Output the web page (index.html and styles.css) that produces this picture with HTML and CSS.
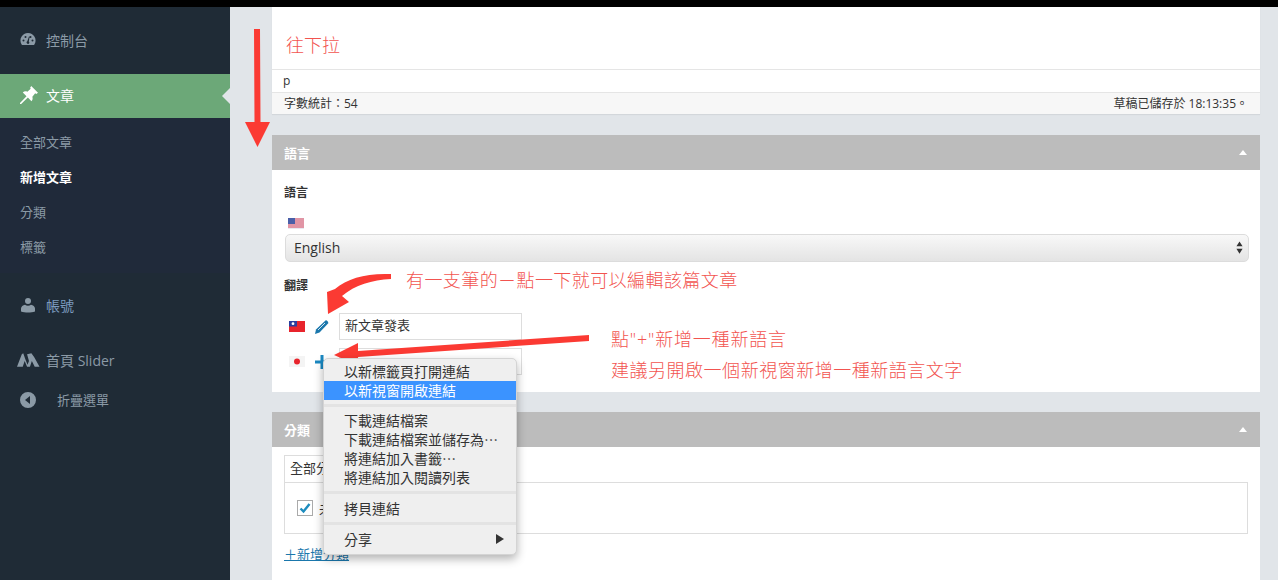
FILE: index.html
```html
<!DOCTYPE html>
<html lang="zh-Hant">
<head>
<meta charset="utf-8">
<title>新增文章</title>
<link rel="stylesheet" href="styles.css">
</head>
<body>
<div class="topbar"></div>
<div class="app">
  <nav class="sidebar">
    <a class="nav-item nav-dash">
      <svg class="ico" viewBox="0 0 16 16"><path fill-rule="evenodd" d="M8 1a7.500 7.500 0 0 0-6.400 11.400c.3.400.6.600 1 .6h10.800c.4 0 .7-.2 1-.6A7.500 7.500 0 0 0 8 1zM3.500 9.500a1 1 0 1 1 0-2 1 1 0 0 1 0 2zm2-3.500a1 1 0 1 1 0-2 1 1 0 0 1 0 2zM8 12a1.500 1.500 0 0 1-.7-2.800L9 4.500l.6.2-.8 4.700A1.500 1.500 0 0 1 8 12zm2.500-6a1 1 0 1 1 0-2 1 1 0 0 1 0 2zm2 3.500a1 1 0 1 1 0-2 1 1 0 0 1 0 2z"/></svg>
      <span>控制台</span>
    </a>
    <a class="nav-item nav-active">
      <svg class="ico ico-pin" viewBox="0 0 16 16"><path d="M10 0l6 6-1.500 1-1-.5-2.500 3c.5 1.800.2 3-.8 4L7 10.200 1 16H0v-1l5.800-6L2.500 5.800c1-1 2.200-1.300 4-.8l3-2.500-.5-1z"/></svg>
      <span>文章</span>
    </a>
    <div class="submenu">
      <a class="sub-item">全部文章</a>
      <a class="sub-item sub-current">新增文章</a>
      <a class="sub-item">分類</a>
      <a class="sub-item">標籤</a>
    </div>
    <a class="nav-item nav-user">
      <svg class="ico" viewBox="0 0 16 16"><circle cx="8" cy="4" r="3"/><path d="M1 14.500v-3c0-2 2-3.500 4-3.800.8.600 1.800 1 3 1s2.200-.4 3-1c2 .3 4 1.800 4 3.800v3c-2 .7-4.500 1-7 1s-5-.3-7-1z"/></svg>
      <span class="blueish">帳號</span>
    </a>
    <a class="nav-item nav-slider">
      <svg class="ico ico-wide" viewBox="0 0 24 14"><path d="M0 14L5 1l1.500-1L9 7l2 5 1.500-4-2-7 4.500-1 3 4 5.500 10h-5l-3-6-2 6h-3L8 8l-2 6z"/></svg>
      <span>首頁 Slider</span>
    </a>
    <a class="nav-item nav-collapse">
      <svg class="ico" viewBox="0 0 16 16"><path fill-rule="evenodd" d="M8 0a8 8 0 1 1 0 16A8 8 0 0 1 8 0zm2 4L5 8l5 4z"/></svg>
      <span class="collapse-label">折疊選單</span>
    </a>
  </nav>

  <main class="content">
    <section class="editor">
      <div class="editor-body">往下拉</div>
      <div class="path-row">p</div>
      <div class="status-row"><span>字數統計：54</span><span>草稿已儲存於 18:13:35。</span></div>
    </section>

    <section class="panel panel-lang">
      <header class="panel-head"><span>語言</span><i class="caret"></i></header>
      <div class="panel-body">
        <h4 class="field-label">語言</h4>
        <svg class="flag flag-us" viewBox="0 0 16 11"><rect width="16" height="11" fill="#e8e8f0"/><path d="M0 1h16M0 3h16M0 5h16M0 7h16M0 9h16" stroke="#d9435a" stroke-width="1"/><rect width="7" height="6" fill="#4a5fa8"/></svg>
        <div class="select"><span>English</span>
          <svg class="updown" viewBox="0 0 8 14"><path d="M4 0l3.500 5.500h-7zM4 14L.5 8.500h7z"/></svg>
        </div>
        <h4 class="field-label label-trans">翻譯</h4>
        <div class="trans-row">
          <svg class="flag" viewBox="0 0 16 11"><rect width="16" height="11" fill="#e8242c"/><rect width="8" height="5.500" fill="#2a3f9e"/><circle cx="4" cy="2.700" r="1.400" fill="#fff"/></svg>
          <svg class="action" viewBox="0 0 16 16"><path fill="#1a77ac" d="M11.500 1.500c1-.8 3 1.300 2.800 2.800L5.500 13.500 1 15l1-4.500z"/><path stroke="#fff" stroke-width=".8" d="M4 11l7-7"/></svg>
          <div class="trans-input">新文章發表</div>
        </div>
        <div class="trans-row row-second">
          <svg class="flag" viewBox="0 0 16 11"><rect width="16" height="11" fill="#f4f4f4"/><circle cx="8" cy="5.500" r="3" fill="#e8242c"/></svg>
          <svg class="action" viewBox="0 0 16 16"><path fill="#1a87c0" d="M6.500 1h3v5.500H15v3H9.500V15h-3V9.500H1v-3h5.500z"/></svg>
          <div class="trans-input"></div>
        </div>
      </div>
    </section>

    <section class="panel panel-cat">
      <header class="panel-head"><span>分類</span><i class="caret"></i></header>
      <div class="panel-body cat-body">
        <div class="cat-tab">全部分類</div>
        <div class="cat-box">
          <span class="check"><svg viewBox="0 0 14 14"><path d="M2.500 7.500l3 3 6-7.500" fill="none" stroke="#1e8cbe" stroke-width="2.400"/></svg></span>
          <span>未分類</span>
        </div>
        <a class="add-cat">＋新增分類</a>
      </div>
    </section>
  </main>
</div>

<svg class="overlay" viewBox="0 0 1278 580">
  <path d="M254 29h6l.5 93h9.500l-12.500 25-12.500-25h9.500z" fill="#fb3a33"/>
  <path d="M391 274C366 273 348 278 335 289l-8 3 1 22 21-12-7-6c13-11 30-16 49-17z" fill="#fb3a33"/>
  <path d="M589 335v6l-231 16 1 9-25-11 24-12 0 8z" fill="#fb3a33"/>
</svg>
<div class="note note-pen">有一支筆的－點一下就可以編輯該篇文章</div>
<div class="note note-plus">點"+"新增一種新語言</div>
<div class="note note-tip">建議另開啟一個新視窗新增一種新語言文字</div>

<div class="ctx">
  <div class="ctx-item">以新標籤頁打開連結</div>
  <div class="ctx-item ctx-hl">以新視窗開啟連結</div>
  <div class="ctx-sep"></div>
  <div class="ctx-item">下載連結檔案</div>
  <div class="ctx-item">下載連結檔案並儲存為⋯</div>
  <div class="ctx-item">將連結加入書籤⋯</div>
  <div class="ctx-item">將連結加入閱讀列表</div>
  <div class="ctx-sep ctx-sep-wide"></div>
  <div class="ctx-item">拷貝連結</div>
  <div class="ctx-sep"></div>
  <div class="ctx-item ctx-sub"><span>分享</span><i class="ctx-arrow"></i></div>
</div>
</body>
</html>
```
FILE: styles.css
```css
* { box-sizing: border-box; }
html, body { margin: 0; height: 580px; overflow: hidden; }
body {
  background: #e1e5e9;
  font-family: "Open Sans", "Noto Sans CJK TC", sans-serif;
  font-size: 13px;
  color: #333;
  position: relative;
}
.topbar { height: 7px; background: #000; }
.app { display: flex; height: 573px; }

/* sidebar */
.sidebar { width: 230px; flex: none; background: #1f2b36; display: flex; flex-direction: column; color: #8b9aa6; }
.nav-item { display: flex; align-items: center; padding-left: 20px; font-size: 14px; }
.ico { width: 16px; height: 16px; fill: #8b9aa6; flex: none; margin-right: 10px; }
.ico-wide { width: 23px; height: 14px; margin-left: -3px; margin-right: 6px; }
.ico-pin { width: 18px; height: 18px; margin-right: 8px; }
.nav-dash { height: 67px; padding-bottom: 2px; }
.nav-active { height: 44px; background: #6ca878; color: #fff; position: relative; padding-bottom: 2px; }
.nav-active .ico { fill: #fff; }
.nav-active::after { content: ""; position: absolute; right: 0; top: 14px; border: 8px solid transparent; border-right-color: #e1e5e9; border-left: 0; }
.submenu { height: 155px; background: #202a3a; display: flex; flex-direction: column; padding-top: 7px; }
.sub-item { height: 35px; line-height: 35px; padding-left: 20px; font-size: 13px; color: #8b9aa6; }
.sub-current { color: #fff; font-weight: 700; }
.nav-user { height: 33px; margin-top: 15px; }
.blueish { color: #7d9cc0; }
.nav-slider { height: 33px; margin-top: 22px; }
.nav-collapse { height: 33px; margin-top: 7px; }
.collapse-label { margin-left: 11px; font-size: 13px; }

/* content */
.content { flex: 1; padding-left: 42px; padding-right: 18px; }
.editor { background: #fff; box-shadow: 0 1px 1px rgba(0,0,0,.06); }
.editor-body { height: 62px; padding: 26px 0 0 14px; font-size: 18px; line-height: 24px; color: #f25450; font-weight: 300; }
.path-row { height: 23px; border-top: 1px solid #e5e5e5; padding-left: 11px; line-height: 22px; font-size: 12px; }
.status-row { height: 22px; display: flex; justify-content: space-between; padding: 0 12px 0 12px; line-height: 21px; font-size: 12px; background: #f7f7f7; border-top: 1px solid #e5e5e5; }

.panel { background: #fff; }
.panel-lang { margin-top: 21px; height: 257px; }
.panel-cat { margin-top: 20px; height: 168px; }
.panel-head { height: 35px; background: #bcbcbc; color: #fff; display: flex; justify-content: space-between; align-items: center; padding: 0 13px 1px 12px; font-size: 13px; font-weight: 700; }
.caret { border: 4px solid transparent; border-bottom: 5px solid #fff; border-top: 0; margin-top: 1px; }
.panel-body { padding: 0 12px; }
.field-label { margin: 0; padding-top: 14px; height: 48px; font-size: 12px; line-height: 17px; font-weight: 700; color: #333; }
.flag { width: 16px; height: 11px; display: block; flex: none; }
.flag-us { margin: 0 0 0 4px; }
.select { height: 28px; margin: 5px -1px 0 1px; border: 1px solid #dcdcdc; border-radius: 5px; background: linear-gradient(#f8f8f8, #e4e4e4); display: flex; align-items: center; justify-content: space-between; padding: 0 5px 1px 8px; font-size: 14px; }
.updown { width: 7px; height: 13px; fill: #333; }
.label-trans { padding-top: 15px; height: 51px; }
.trans-row { display: flex; align-items: center; height: 27px; padding-left: 5px; }
.trans-row .action { width: 16px; height: 16px; margin-left: 9px; flex: none; }
.row-second { margin-top: 8px; }
.trans-input { width: 183px; height: 27px; margin-left: 9px; border: 1px solid #ddd; padding-left: 5px; line-height: 23px; font-size: 13px; background: #fff; }

.cat-body { display: flow-root; }
.cat-tab { margin-top: 8px; width: 120px; height: 28px; padding-left: 5px; line-height: 25px; font-size: 13px; border: 1px solid #ddd; border-bottom: 0; background: #fff; }
.cat-box { height: 52px; margin-top: -1px; border: 1px solid #ddd; display: flex; align-items: center; gap: 6px; padding-left: 12px; }
.check { width: 16px; height: 16px; border: 1px solid #aaa; display: block; background: #fff; }
.check svg { display: block; width: 14px; height: 14px; }
.add-cat { display: inline-block; margin-top: 10px; color: #1a77ac; text-decoration: underline; font-size: 13px; }

/* annotations */
.overlay { position: absolute; left: 0; top: 0; width: 1278px; height: 580px; pointer-events: none; }
.note { position: absolute; font-size: 18px; letter-spacing: .42px; line-height: 24px; color: #f25450; font-weight: 300; white-space: nowrap; }
.note-pen { left: 406px; top: 268px; }
.note-plus { left: 611px; top: 327px; letter-spacing: .8px; }
.note-tip { left: 611px; top: 358px; letter-spacing: .52px; }

/* context menu */
.ctx { position: absolute; left: 323px; top: 358px; width: 194px; height: 197px; padding-top: 3px; background: #efefef; border-radius: 5px; border: 1px solid #d4d4d4; box-shadow: 0 4px 10px rgba(0,0,0,.3); font-size: 14px; color: #333; }
.ctx-item { height: 19px; line-height: 19px; padding-left: 20px; }
.ctx-hl { background: #3b93ff; color: #fff; }
.ctx-sep { height: 3px; background: #e3e3e3; margin: 4px 0; }
.ctx-sep-wide { margin-bottom: 5px; }
.ctx-sub { display: flex; justify-content: space-between; align-items: center; padding-right: 12px; height: 20px; }
.ctx-arrow { border: 5px solid transparent; border-left: 8px solid #333; border-right: 0; }
```
